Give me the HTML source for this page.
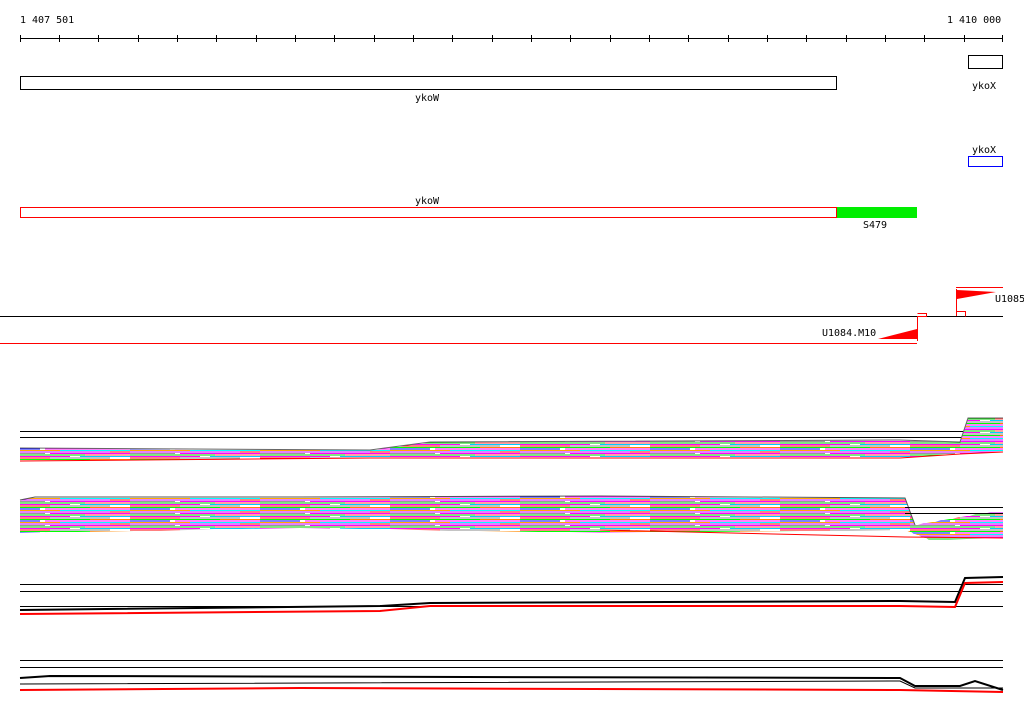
<!DOCTYPE html>
<html><head><style>
body{margin:0;background:#fff;width:1024px;height:714px;overflow:hidden}
svg{display:block}
text{font-family:"DejaVu Sans Mono","Liberation Mono",monospace;font-size:10px;fill:#000}
</style></head><body>
<svg width="1024" height="714" viewBox="0 0 1024 714">
<defs>
<pattern id="st" width="130" height="12" patternUnits="userSpaceOnUse">
<rect width="130" height="12" fill="#fff"/>
<rect y="0" width="70" height="1" fill="#f0f"/><rect x="80" y="0" width="50" height="1" fill="#0cf"/>
<rect y="1.5" width="50" height="1" fill="#f00"/><rect x="50" y="1.5" width="60" height="1" fill="#888"/>
<rect y="3" width="90" height="1" fill="#0f0"/><rect x="90" y="3" width="40" height="1" fill="#f80"/>
<rect y="4.5" width="40" height="1" fill="#00f"/><rect x="45" y="4.5" width="85" height="1" fill="#f0f"/>
<rect y="6" width="60" height="1" fill="#fa0"/><rect x="60" y="6" width="70" height="1" fill="#0ff"/>
<rect y="7.5" width="110" height="1" fill="#c0f"/><rect x="110" y="7.5" width="20" height="1" fill="#f00"/>
<rect y="9" width="45" height="1" fill="#999"/><rect x="50" y="9" width="80" height="1" fill="#f0f"/>
<rect y="10.5" width="85" height="1" fill="#0c0"/><rect x="85" y="10.5" width="45" height="1" fill="#f44"/>
</pattern>
</defs>
<text x="20" y="23">1 407 501</text>
<text x="947" y="23">1 410 000</text>
<line x1="20" y1="38.5" x2="1003" y2="38.5" stroke="#000"/>
<g stroke="#000">
<path d="M20.5 35v7M59.5 35v7M98.5 35v7M138.5 35v7M177.5 35v7M216.5 35v7M256.5 35v7M295.5 35v7M334.5 35v7M374.5 35v7M413.5 35v7M452.5 35v7M492.5 35v7M531.5 35v7M570.5 35v7M610.5 35v7M649.5 35v7M688.5 35v7M728.5 35v7M767.5 35v7M806.5 35v7M846.5 35v7M885.5 35v7M924.5 35v7M964.5 35v7M1002.5 35v7"/>
</g>
<rect x="20.5" y="76.5" width="816" height="13" fill="none" stroke="#000"/>
<text x="415" y="101">ykoW</text>
<rect x="968.5" y="55.5" width="34" height="13" fill="none" stroke="#000"/>
<text x="972" y="89">ykoX</text>
<text x="972" y="153">ykoX</text>
<rect x="968.5" y="156.5" width="34" height="10" fill="none" stroke="#00f"/>
<text x="415" y="204">ykoW</text>
<rect x="20.5" y="207.5" width="816" height="10" fill="none" stroke="#f00"/>
<rect x="837" y="207" width="80" height="11" fill="#0e0"/>
<text x="863" y="228">S479</text>
<line x1="0" y1="316.5" x2="1003" y2="316.5" stroke="#000"/>
<line x1="0" y1="343.5" x2="917" y2="343.5" stroke="#f00"/>
<line x1="956" y1="287.5" x2="1003" y2="287.5" stroke="#f00"/>
<path d="M917.5 316v25M917.5 316.5h9v-3h-9M956.5 316v-27M956.5 311.5h9v5" stroke="#f00" fill="none"/>
<polygon points="878,339 917,329 917,339" fill="#f00"/>
<polygon points="957,290 996,292 957,299" fill="#f00"/>
<text x="822" y="336">U1084.M10</text>
<text x="995" y="302">U1085</text>
<path d="M20 431.5H1003M20 437.5H1003" stroke="#000"/>
<polygon points="20,448 370,450 430,442 900,440 960,442 968,418 1003,418 1003,452 960,454 900,458 370,458 20,461" fill="url(#st)"/>
<path d="M20 448L370 450 430 442 900 440 960 442 968 418 1003 418" stroke="#666" fill="none"/>
<path d="M20 461L370 458 900 458 960 454 1003 452" stroke="#f00" fill="none"/>
<polygon points="20,500 35,497 300,497 600,496 905,498 915,525 990,512 1003,512 1003,538 930,540 905,530 600,533 300,528 20,533" fill="url(#st)"/>
<path d="M20 500L35 497 300 497 600 496 905 498 915 525" stroke="#555" fill="none"/>
<path d="M905 507.5H1003M905 513.5H1003" stroke="#000"/>
<path d="M600 530L905 537 1003 538" stroke="#f00" fill="none"/>
<path d="M20 584.5H1003M20 591.5H1003M20 606.5H1003" stroke="#000"/>
<path d="M20 610L380 606 430 603 900 601 955 602 965 578 1003 577" stroke="#000" stroke-width="2" fill="none"/>
<path d="M20 614L380 611 430 606 900 606 955 607 965 583 1003 582" stroke="#f00" stroke-width="2" fill="none"/>
<path d="M20 660.5H1003M20 667.5H1003" stroke="#000"/>
<path d="M20 678L50 676 900 678 915 686 960 686 975 681 1003 690" stroke="#000" stroke-width="2" fill="none"/>
<path d="M20 684L900 681 915 688 1003 688" stroke="#000" fill="none"/>
<path d="M20 690L300 688 900 690 1003 692" stroke="#f00" stroke-width="2" fill="none"/>
</svg>
</body></html>
